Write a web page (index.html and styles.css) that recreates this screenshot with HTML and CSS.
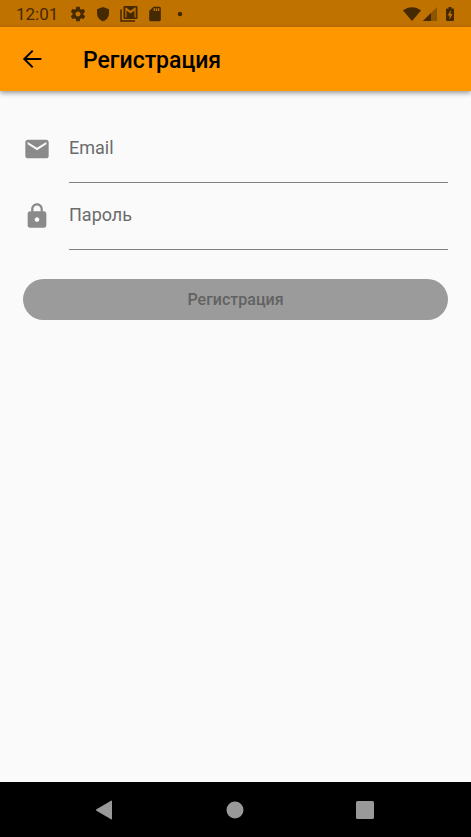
FILE: index.html
```html
<!DOCTYPE html>
<html lang="ru">
<head>
<meta charset="utf-8">
<meta name="viewport" content="width=device-width, initial-scale=1">
<title>Регистрация</title>
<link rel="stylesheet" href="styles.css">
</head>
<body>
<div class="status">
  <time class="clock">12:01</time>
  <div class="notices">
    <svg class="glyph" viewBox="1 1 22 22"><path d="M19.43 12.98c.04-.32.07-.64.07-.98s-.03-.66-.07-.98l2.11-1.65c.19-.15.24-.42.12-.64l-2-3.46c-.12-.22-.39-.3-.61-.22l-2.49 1c-.52-.4-1.08-.73-1.69-.98l-.38-2.65C14.46 2.18 14.25 2 14 2h-4c-.25 0-.46.18-.49.42l-.38 2.65c-.61.25-1.17.59-1.69.98l-2.49-1c-.23-.09-.49 0-.61.22l-2 3.46c-.13.22-.07.49.12.64l2.11 1.65c-.04.32-.07.65-.07.98s.03.66.07.98l-2.11 1.65c-.19.15-.24.42-.12.64l2 3.46c.12.22.39.3.61.22l2.49-1c.52.4 1.08.73 1.69.98l.38 2.65c.03.24.24.42.49.42h4c.25 0 .46-.18.49-.42l.38-2.65c.61-.25 1.17-.59 1.69-.98l2.49 1c.23.09.49 0 .61-.22l2-3.46c.12-.22.07-.49-.12-.64l-2.11-1.65zM12 15.5c-1.93 0-3.5-1.57-3.5-3.5s1.57-3.5 3.5-3.5 3.5 1.57 3.5 3.5-1.57 3.5-3.5 3.5z"/></svg>
    <svg class="glyph" viewBox="0 0 24 24"><path d="M12 1.500 3 5v6c0 5.500 3.500 10.300 9 11.800 5.500-1.500 9-6.300 9-11.800V5z"/></svg>
    <svg class="glyph wide" viewBox="0 0 18 16"><path d="M1 3.500V15h14" fill="none" stroke="currentColor" stroke-width="1.500"/><path fill-rule="evenodd" d="M4.500 0h12a1 1 0 0 1 1 1v11a1 1 0 0 1-1 1h-12a1 1 0 0 1-1-1V1a1 1 0 0 1 1-1zM5.300 1.500v10h1.200V4.500l4 3 4-3v7h1.200v-10h-.8l-4.400 3.300-4.400-3.300z"/></svg>
    <svg class="glyph" viewBox="1 1 22 22"><path d="M18 2h-8L4 8v12c0 1.100.9 2 2 2h12c1.100 0 2-.9 2-2V4c0-1.100-.9-2-2-2zm-6 6h-2V4h2zm3 0h-2V4h2zm3 0h-2V4h2z"/></svg>
    <svg class="glyph" viewBox="0 0 18 18"><circle cx="9" cy="9" r="2.500"/></svg>
  </div>
  <div class="system">
    <svg class="wifi" viewBox="0 0 18 14"><path d="M0 3.500C5-1 13-1 18 3.500L9 14z"/></svg>
    <svg class="signal" viewBox="0 0 14 14"><path d="M14 0v14H0z" opacity=".4"/><path d="M8 6v8H0z"/></svg>
    <svg class="battery" viewBox="0 0 8 14"><path fill-rule="evenodd" d="M2.500 0h3v1.500H7a1 1 0 0 1 1 1V13a1 1 0 0 1-1 1H1a1 1 0 0 1-1-1V2.500a1 1 0 0 1 1-1h1.500zM5 3 1.500 8.500h2V12.500L6.500 7h-2z"/></svg>
  </div>
</div>
<header class="appbar">
  <button class="back" type="button" aria-label="Назад"><svg viewBox="0 0 24 24"><path d="M20 11.150H7.500l5.700-5.700L12 4.200 4.200 12 12 19.800l1.200-1.200-5.700-5.750H20z"/></svg></button>
  <h1 class="title">Регистрация</h1>
</header>
<main class="content">
  <form class="form">
    <div class="row">
      <label class="lead" for="email"><svg viewBox="0 0 24 24"><path d="M20 4H4c-1.100 0-1.990.9-1.990 2L2 18c0 1.100.9 2 2 2h16c1.100 0 2-.9 2-2V6c0-1.100-.9-2-2-2zm0 4-8 5-8-5V6l8 5 8-5z"/></svg></label>
      <input class="field" id="email" type="email" placeholder="Email" aria-label="Email">
    </div>
    <div class="row">
      <label class="lead" for="password"><svg viewBox="0 0 24 24"><path d="M18 8h-1V6c0-2.760-2.240-5-5-5S7 3.240 7 6v2H6c-1.100 0-2 .9-2 2v10c0 1.100.9 2 2 2h12c1.100 0 2-.9 2-2V10c0-1.100-.9-2-2-2zm-6 9c-1.100 0-2-.9-2-2s.9-2 2-2 2 .9 2 2-.9 2-2 2zm3.100-9H8.900V6c0-1.710 1.390-3.100 3.100-3.100s3.100 1.390 3.100 3.100z"/></svg></label>
      <input class="field" id="password" type="password" placeholder="Пароль" aria-label="Пароль">
    </div>
    <button class="submit" type="submit" disabled>Регистрация</button>
  </form>
</main>
<nav class="navbar">
  <button type="button" aria-label="Назад"><svg viewBox="0 0 20 20"><path d="M1.500 9.200 16 .7q1-.5 1 .5v17.600q0 1-1 .5L1.500 10.800q-1.300-.8 0-1.600z"/></svg></button>
  <button type="button" aria-label="Домой"><svg viewBox="0 0 20 20"><circle cx="10" cy="10" r="8.500"/></svg></button>
  <button type="button" aria-label="Обзор"><svg viewBox="0 0 20 20"><rect x="1" y="1" width="18" height="18" rx="1.500"/></svg></button>
</nav>
</body>
</html>
```
FILE: styles.css
```css
* {
  box-sizing: border-box;
}

body {
  margin: 0;
  min-height: 100vh;
  display: flex;
  flex-direction: column;
  background: #fafafa;
  color: #000;
  font-family: Roboto, "Liberation Sans", sans-serif;
}

svg {
  display: block;
  fill: currentColor;
}

button {
  border: 0;
  padding: 0;
  background: none;
  color: inherit;
  font: inherit;
}

.status {
  display: flex;
  align-items: center;
  height: 27px;
  padding: 0 17px 0 16px;
  background: #c07200;
  color: #452900;
}

.clock {
  font-size: 17px;
  line-height: 28px;
}

.notices {
  display: flex;
  align-items: center;
  gap: 9px;
  margin-left: 12px;
}

.glyph {
  width: 16px;
  height: 16px;
}

.wide {
  width: 18px;
}

.system {
  display: flex;
  align-items: center;
  margin-left: auto;
}

.wifi {
  width: 18px;
  height: 14px;
}

.signal {
  width: 14px;
  height: 14px;
  margin-left: 2px;
}

.battery {
  width: 8px;
  height: 14px;
  margin-left: 9px;
}

.appbar {
  display: flex;
  align-items: center;
  gap: 37px;
  height: 64px;
  padding: 0 18px;
  background: #ff9800;
  box-shadow: 0 2px 5px rgba(0, 0, 0, 0.4);
}

.back svg {
  width: 28px;
  height: 28px;
}

.title {
  margin: 0;
  padding-top: 3px;
  font-size: 23px;
  font-weight: 500;
  line-height: 28px;
}

.content {
  flex: 1;
  padding: 25px 23px;
}

.form {
  display: flex;
  flex-direction: column;
}

.row {
  display: flex;
  align-items: center;
  gap: 18px;
}

.lead {
  padding-bottom: 2px;
  color: #8a8a8a;
}

.lead svg {
  width: 28px;
  height: 28px;
}

.field {
  flex: 1;
  min-width: 0;
  height: 67px;
  padding: 0 0 3px;
  border: 0;
  border-bottom: 1px solid #808080;
  border-radius: 0;
  outline: 0;
  background: none;
  color: #212121;
  font: inherit;
  font-size: 18px;
}

.field::placeholder {
  color: #6b6b6b;
  opacity: 1;
}

.submit {
  height: 41px;
  margin-top: 29px;
  border-radius: 21px;
  background: #9b9b9b;
  color: #626262;
  font-size: 16px;
  font-weight: 500;
}

.navbar {
  display: flex;
  justify-content: center;
  gap: 110px;
  height: 55px;
  padding-right: 1px;
  background: #000;
  color: #999;
}

.navbar svg {
  width: 20px;
  height: 20px;
}
```
